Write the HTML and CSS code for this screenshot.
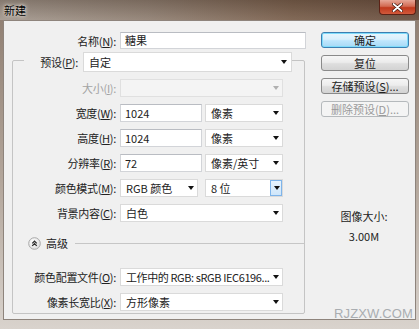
FILE: index.html
```html
<!DOCTYPE html>
<html>
<head>
    <meta charset="utf-8">
    <title>新建</title>
    <link rel="stylesheet" href="styles.css">
</head>
<body>
    <div class="window">
        <div class="titlebar">
            <span class="title">新建</span>
            <span class="close">
                <svg width="11" height="9" viewBox="0 0 11 9">
                    <path d="M1.5 1 L9.5 8 M9.5 1 L1.5 8" stroke="#3a1008" stroke-width="3.2" stroke-linecap="round"/>
                    <path d="M1.5 1 L9.5 8 M9.5 1 L1.5 8" stroke="#fff" stroke-width="1.8" stroke-linecap="round"/>
                </svg>
            </span>
        </div>
        <div class="frame">
            <div class="client">
                <div class="main">
                    <div class="row name-row">
                        <span class="lbl">名称(<u>N</u>):</span>
                        <div class="field name-field">糖果</div>
                    </div>

                    <fieldset class="group">
                        <legend>
                            <div class="preset">
                                <span class="lbl">预设(<u>P</u>):</span>
                                <div class="combo preset-combo">自定<span class="arrow"></span></div>
                            </div>
                        </legend>

                        <div class="rows">
                            <div class="row">
                                <span class="lbl disabled">大小(<u>I</u>):</span>
                                <div class="combo long off"><span class="arrow"></span></div>
                            </div>
                            <div class="row">
                                <span class="lbl">宽度(<u>W</u>):</span>
                                <div class="ctrls">
                                    <div class="field num">1024</div>
                                    <div class="combo unit">像素<span class="arrow"></span></div>
                                </div>
                            </div>
                            <div class="row">
                                <span class="lbl">高度(<u>H</u>):</span>
                                <div class="ctrls">
                                    <div class="field num">1024</div>
                                    <div class="combo unit">像素<span class="arrow"></span></div>
                                </div>
                            </div>
                            <div class="row">
                                <span class="lbl">分辨率(<u>R</u>):</span>
                                <div class="ctrls">
                                    <div class="field num">72</div>
                                    <div class="combo unit">像素/英寸<span class="arrow"></span></div>
                                </div>
                            </div>
                            <div class="row">
                                <span class="lbl">颜色模式(<u>M</u>):</span>
                                <div class="ctrls wide">
                                    <div class="combo unit">RGB 颜色<span class="arrow"></span></div>
                                    <div class="combo unit focus">8 位<span class="drop"><span class="arrow"></span></span></div>
                                </div>
                            </div>
                            <div class="row">
                                <span class="lbl">背景内容(<u>C</u>):</span>
                                <div class="combo long">白色<span class="arrow"></span></div>
                            </div>
                        </div>

                        <div class="adv">
                            <svg class="adv-icon" width="13" height="13" viewBox="0 0 13 13">
                                <defs>
                                    <radialGradient id="ball" cx="0.4" cy="0.35" r="0.7">
                                        <stop offset="0" stop-color="#ffffff"/>
                                        <stop offset="1" stop-color="#dcdcdc"/>
                                    </radialGradient>
                                </defs>
                                <circle cx="6.5" cy="6.5" r="5.8" fill="url(#ball)" stroke="#a9a9a9"/>
                                <path d="M4.2 6.4 L6.5 4.2 L8.8 6.4 M4.2 8.9 L6.5 6.7 L8.8 8.9" fill="none" stroke="#2b2b2b" stroke-width="1.2"/>
                            </svg>
                            <span>高级</span>
                            <span class="sep"></span>
                        </div>

                        <div class="rows rows-adv">
                            <div class="row">
                                <span class="lbl">颜色配置文件(<u>O</u>):</span>
                                <div class="combo long tight">工作中的 RGB: sRGB IEC6196...<span class="arrow"></span></div>
                            </div>
                            <div class="row">
                                <span class="lbl">像素长宽比(<u>X</u>):</span>
                                <div class="combo long">方形像素<span class="arrow"></span></div>
                            </div>
                        </div>
                    </fieldset>
                </div>

                <div class="side">
                    <button class="btn default">确定</button>
                    <button class="btn">复位</button>
                    <button class="btn">存储预设(<u>S</u>)...</button>
                    <button class="btn" disabled>删除预设(<u>D</u>)...</button>
                    <div class="info">
                        <div>图像大小:</div>
                        <div>3.00M</div>
                    </div>
                </div>
            </div>
        </div>
        <div class="watermark">RJZXW.COM</div>
    </div>
</body>
</html>
```

FILE: styles.css
```css
* {
    box-sizing: border-box;
}

body {
    margin: 0;
    font-family: "Noto Sans CJK SC", sans-serif;
    font-size: 11px;
    color: #222;
}

.window {
    position: relative;
    width: 419px;
    height: 329px;
    display: flex;
    flex-direction: column;
    background: linear-gradient(180deg, #8d7c6f 0%, #b3a69b 55%, #d9d3cd 100%);
    overflow: hidden;
}

.titlebar {
    height: 20px;
    display: flex;
    justify-content: space-between;
    padding-left: 4px;
    background:
        linear-gradient(180deg, rgba(40, 25, 15, 0.25), rgba(255, 255, 255, 0.05)),
        linear-gradient(90deg, #a59a90 0%, #938376 35%, #7c624f 70%, #6d5242 100%);
}

.title {
    line-height: 20px;
    color: #000;
    text-shadow: 0 0 5px #e9e4de, 0 0 3px #e9e4de;
}

.close {
    width: 37px;
    height: 15px;
    margin-right: 3px;
    display: flex;
    align-items: center;
    justify-content: center;
    border: 1px solid #5c2216;
    border-top: none;
    border-radius: 0 0 4px 4px;
    background: linear-gradient(180deg, #e6a797 0%, #d26a52 45%, #c0391d 55%, #d25a3c 100%);
}

.frame {
    flex: 1;
    display: flex;
    padding: 0 3px 9px;
}

.client {
    flex: 1;
    display: flex;
    background: #f0f0f0;
    border: 1px solid #8e847c;
}

.main {
    width: 304px;
}

.row {
    display: flex;
    align-items: center;
    gap: 4px;
    height: 18px;
}

.lbl {
    text-align: right;
    white-space: nowrap;
    letter-spacing: -0.3px;
}

.lbl.disabled {
    color: #a3a3a3;
}

.name-row {
    margin-top: 11px;
    height: 17px;
}

.name-row .lbl {
    width: 112px;
}

.field,
.combo {
    position: relative;
    height: 18px;
    line-height: 16px;
    padding-left: 4px;
    background: #fff;
    border: 1px solid #dadada;
    white-space: nowrap;
    overflow: hidden;
}

.field {
    border-color: #d2d4d8;
    border-top-color: #b9bcc2;
}

.name-field {
    width: 186px;
    height: 17px;
    line-height: 15px;
}

.combo {
    padding-left: 5px;
}

.combo.tight {
    letter-spacing: -0.4px;
}

.arrow {
    position: absolute;
    right: 3px;
    top: 6px;
    border-left: 3.5px solid transparent;
    border-right: 3.5px solid transparent;
    border-top: 4px solid #111;
}

.combo.off {
    background: #f4f4f4;
    border-color: #e0e0e0;
}

.combo.off .arrow {
    border-top-color: #b0b0b0;
}

.group {
    margin: 1px 3px 0 8px;
    padding: 0 0 2px;
    min-width: 0;
    border: 1px solid #c4c4c4;
    border-radius: 2px;
}

.group legend {
    margin-left: 11px;
    padding: 0;
}

.preset {
    display: flex;
    align-items: center;
    gap: 5px;
    margin: 2px 0 -2px;
}

.preset .lbl {
    width: 54px;
}

.preset-combo {
    width: 209px;
    height: 20px;
    line-height: 18px;
}

.preset-combo .arrow {
    right: 4px;
    top: 7px;
}

.rows {
    display: flex;
    flex-direction: column;
    gap: 7px;
    margin-top: 9px;
}

.rows .lbl {
    width: 103px;
}

.ctrls {
    display: flex;
    gap: 3px;
}

.ctrls.wide {
    gap: 7px;
}

.num {
    width: 82px;
}

.unit {
    width: 78px;
}

.long {
    width: 163px;
}

.focus .drop {
    position: absolute;
    right: 0;
    top: 0;
    width: 12px;
    height: 16px;
    background: linear-gradient(180deg, #e7f3fd, #cfe6fa);
    border: 1px solid #7eb4ea;
}

.focus .drop .arrow {
    right: 1.5px;
    top: 5px;
}

.adv {
    display: flex;
    align-items: center;
    gap: 5px;
    height: 14px;
    margin-top: 14px;
    padding-left: 15px;
}

.sep {
    flex: 1;
    height: 1px;
    margin-left: 2px;
    background: #c6c6c6;
}

.rows-adv {
    margin-top: 18px;
}

.side {
    flex: 1;
    padding-top: 11px;
}

.btn {
    display: block;
    width: 88px;
    height: 16px;
    margin: 0 0 7px 13px;
    padding: 0;
    font: inherit;
    line-height: 14px;
    color: #222;
    text-align: center;
    border: 1px solid #8a8a8a;
    border-radius: 3px;
    background: linear-gradient(180deg, #f6f6f6 0%, #ececec 45%, #dedede 55%, #d3d3d3 100%);
}

.btn.default {
    border-color: #3c7fb1;
    background: linear-gradient(180deg, #eaf6fd 0%, #d9f0fc 45%, #bee6fd 55%, #a7d9f5 100%);
    box-shadow: inset 0 0 0 1px #7fdcfb;
}

.btn:disabled {
    color: #9a9a9a;
    border-color: #b5b9bc;
    background: #f4f4f4;
}

.info {
    margin-top: 89px;
    padding-left: 5px;
    text-align: center;
    line-height: 20px;
}

.watermark {
    position: absolute;
    right: 6px;
    bottom: 9px;
    font-family: "Liberation Sans", sans-serif;
    font-size: 13px;
    line-height: 13px;
    letter-spacing: 0.1px;
    color: #a9adb1;
}
```
